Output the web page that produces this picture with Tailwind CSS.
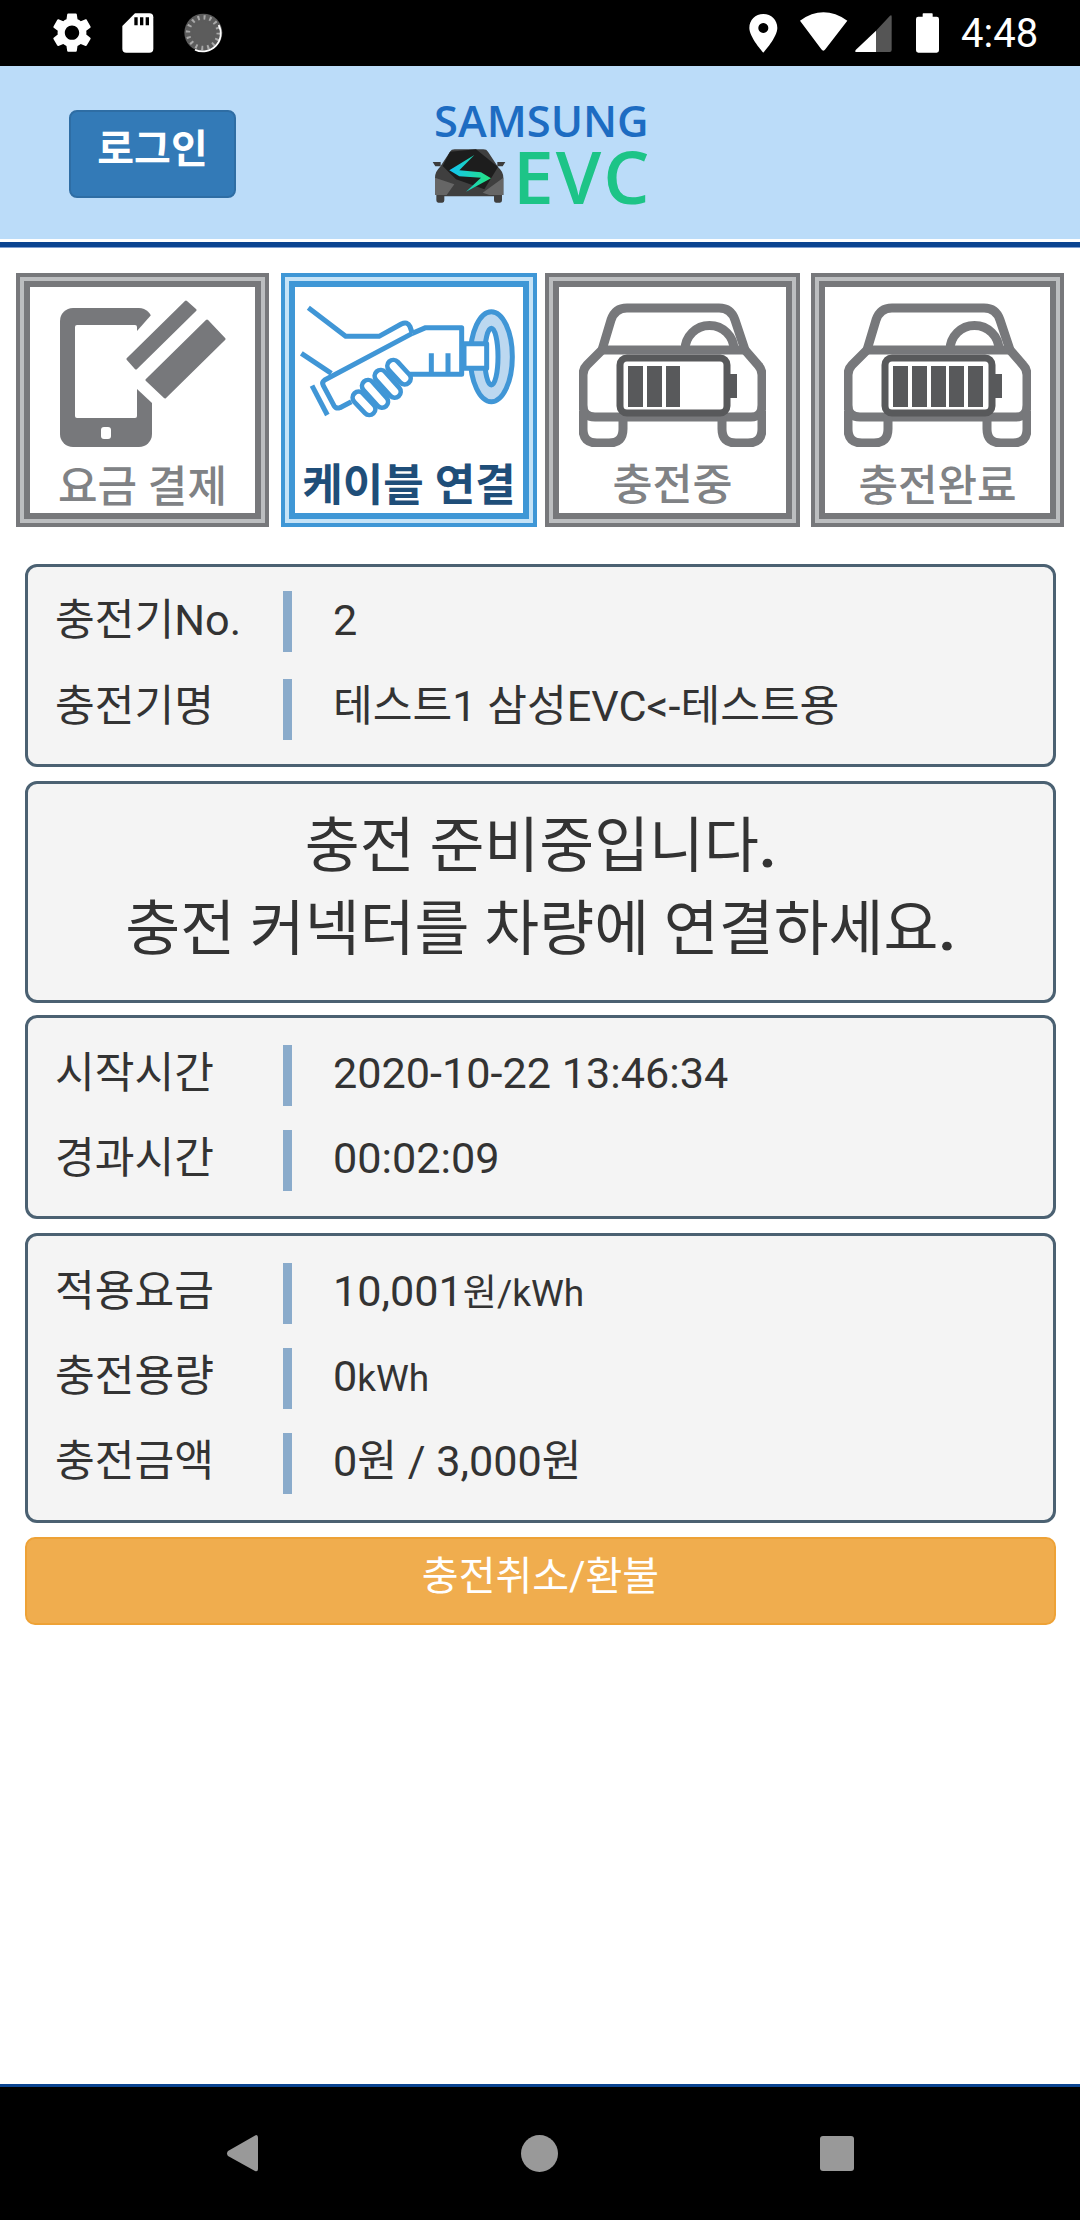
<!DOCTYPE html>
<html lang="ko">
<head>
<meta charset="utf-8">
<script src="https://cdn.jsdelivr.net/npm/@tailwindcss/browser@4"></script>
</head>
<body class="m-0 bg-white">
<div class="w-[1080px] h-[2220px] flex flex-col overflow-hidden bg-white text-[#333] font-['Roboto','Noto_Sans_CJK_KR',sans-serif]">

  <!-- status bar -->
  <div class="h-[66px] shrink-0 bg-black flex items-center">
    <svg class="ml-[40px]" width="200" height="66" viewBox="0 0 600 198">
      <g transform="translate(24,26) scale(6)"><path fill="#fff" d="M19.14 12.94c.04-.3.06-.61.06-.94 0-.32-.02-.64-.07-.94l2.03-1.58c.18-.14.23-.41.12-.61l-1.92-3.32c-.12-.22-.37-.29-.59-.22l-2.39.96c-.5-.38-1.03-.7-1.62-.94l-.36-2.54c-.04-.24-.24-.41-.48-.41h-3.84c-.24 0-.43.17-.47.41l-.36 2.54c-.59.24-1.13.57-1.62.94l-2.39-.96c-.22-.08-.47 0-.59.22L2.74 8.87c-.12.21-.08.47.12.61l2.03 1.58c-.05.3-.09.63-.09.94s.02.64.07.94l-2.03 1.58c-.18.14-.23.41-.12.61l1.92 3.32c.12.22.37.29.59.22l2.39-.96c.5.38 1.03.7 1.62.94l.36 2.54c.05.24.24.41.48.41h3.84c.24 0 .44-.17.47-.41l.36-2.54c.59-.24 1.13-.56 1.62-.94l2.39.96c.22.08.47 0 .59-.22l1.92-3.32c.12-.22.07-.47-.12-.61l-2.01-1.58zM12 15.6c-1.98 0-3.6-1.62-3.6-3.6s1.62-3.6 3.6-3.6 3.6 1.62 3.6 3.6-1.62 3.6-3.6 3.6z"/></g>
      <path fill="#fff" d="M285 40H328Q340 40 340 52V146Q340 158 328 158H259Q247 158 247 146V78Z"/>
      <path fill="#000" d="M283 52h10v24h-10zM300 52h10v24h-10zM317 52h10v24h-10z"/>
      <circle cx="490" cy="98" r="57" fill="#5c5c5c"/>
      <circle cx="490" cy="98" r="46" fill="none" stroke="#a8a8a8" stroke-width="13" stroke-dasharray="6 12"/>
      <circle cx="490" cy="98" r="33" fill="#5c5c5c"/>
      <path d="M536 75A54 54 0 0 1 465 149" fill="none" stroke="#fff" stroke-width="5"/>
    </svg>
    <svg class="ml-[500px]" width="220" height="66" viewBox="0 0 660 198">
      <path fill="#fff" fill-rule="evenodd" d="M70 42C46 42 28 60 28 84C28 112 70 158 70 158C70 158 112 112 112 84C112 60 94 42 70 42ZM70 69A15 15 0 1 1 69.900 69Z"/>
      <path fill="#fff" d="M180 62Q250 12 322 62L256 148Q250 156 244 148Z"/>
      <path fill="#555" d="M408 92L450 47Q455 43 455 50V150Q455 156 449 156H408Z"/>
      <path fill="#fff" d="M408 92V156H350Q343 156 347 150Z"/>
      <path fill="#fff" d="M548 50V42Q548 40 550 40H576Q578 40 578 42V50H590Q597 50 597 57V151Q597 158 590 158H535Q528 158 528 151V57Q528 50 535 50Z"/>
    </svg>
    <span class="ml-[1px] text-[40px] leading-none text-white pt-[2px]">4:48</span>
  </div>

  <!-- header -->
  <div class="h-[173px] shrink-0 bg-[#bbdcf9] flex items-center pt-[3px]">
    <button class="ml-[69px] w-[167px] h-[88px] rounded-[8px] bg-[#337ab7] border-2 border-[#2e6da4] text-white text-[40px] font-bold leading-none pb-[8px]">로그인</button>
    <div class="ml-[196px] flex flex-col w-[228px]">
      <span class="ml-[2px] h-[44px] text-[43.5px] leading-[32px] font-semibold text-[#1d6cc2] font-['Open_Sans',sans-serif]">SAMSUNG</span>
      <div class="flex items-center h-[54px]">
        <svg width="74" height="54" viewBox="18 165 222 160">
          <defs><linearGradient id="arrow" x1="0" y1="0" x2="1" y2="0"><stop offset="0" stop-color="#12c4f5"/><stop offset="1" stop-color="#25e27f"/></linearGradient></defs>
          <path fill="#3c3c3c" d="M20 203H44V216H28ZM238 203H214V216H230Z"/>
          <path fill="#3f3f3f" d="M72 172Q76 165 86 165H172Q182 165 186 172L216 218Q232 232 232 250V302H228V318Q228 325 222 325H210Q204 325 204 318V306H55V318Q55 325 49 325H37Q31 325 31 318V302H27V250Q27 232 42 218Z"/>
          <path fill="#1d1d1d" d="M72 172L150 165L216 218L175 285L90 255L50 215Z"/>
          <path fill="#666" d="M27 250L85 270L62 302H27ZM232 250L170 295L190 302H232Z"/>
          <path fill="url(#arrow)" d="M145 182L70 228L100 246L165 250L120 292L195 252L165 234L100 228Z"/>
        </svg>
        <span class="ml-[7px] text-[73px] leading-[42px] tracking-[2px] font-semibold text-[#1dc487] font-['Open_Sans',sans-serif]">EVC</span>
      </div>
    </div>
  </div>
  <div class="h-[3px] shrink-0 bg-white"></div>
  <div class="h-[5px] shrink-0 bg-[#0a4491]"></div>
  <div class="h-[1px] shrink-0 bg-[#7f9fd0]"></div>

  <!-- step tabs -->
  <div class="flex pl-[16px] pt-[25px] shrink-0">
    <div class="w-[253px] h-[254px] border-[4px] border-[#77787b]"><div class="h-full border-[4px] border-[#bcbec0]"><div class="h-full border-[6px] border-[#77787b] flex flex-col items-center pt-[13px]">
      <svg width="166" height="147" viewBox="0 0 166 147">
        <rect x="0" y="8" width="92" height="139" rx="13" fill="#77787b"/>
        <rect x="15" y="25" width="62" height="93" rx="2" fill="#fff"/>
        <rect x="41" y="127" width="10" height="12" rx="3" fill="#fff"/>
        <path fill="#fff" d="M92 14L77 31V89L92 103H100V14Z"/>
        <path fill="#77787b" stroke="#77787b" stroke-width="3" stroke-linejoin="round" d="M126 2L135 10L76 68L68 59Z"/>
        <path fill="#77787b" stroke="#77787b" stroke-width="3" stroke-linejoin="round" d="M147 21L164 39L105 97L87 80Z"/>
      </svg>
      <span class="mt-auto pb-[4px] text-[43px] leading-[44px] font-medium text-[#808285]">요금 결제</span>
    </div></div></div>

    <div class="ml-[12px] w-[256px] h-[254px] border-[4px] border-[#3f97d6]"><div class="h-full border-[4px] border-[#c5e3f7]"><div class="h-full border-[6px] border-[#3f97d6] flex flex-col items-center pt-[8px]">
      <svg width="230" height="130" viewBox="0 0 690 390" fill="none" stroke="#4096d6" stroke-width="15" stroke-linejoin="round" stroke-linecap="butt">
        <path d="M43 38L155 124H255L322 87Q340 78 348 95L355 115"/>
        <path d="M22 175L112 235"/>
        <path d="M54 272L100 360"/>
        <path d="M355 115L395 98H503V238H345"/>
        <path d="M355 115L92 255Q82 262 88 272L120 332Q126 342 138 338L172 320"/>
        <path d="M412 175V238M462 175V238"/>
        <ellipse cx="592" cy="185" rx="63" ry="135" fill="#bcd8f0"/>
        <ellipse cx="592" cy="185" rx="20" ry="85" fill="#fff"/>
        <path d="M510 146H578V220H510Z" fill="#fff"/>
        <g stroke-linecap="round">
          <path d="M194 308L226 342" stroke-width="50"/>
          <path d="M222 273L264 320" stroke-width="50"/>
          <path d="M260 243L302 290" stroke-width="50"/>
          <path d="M298 213L332 250" stroke-width="50"/>
          <path d="M194 308L226 342" stroke="#fff" stroke-width="22"/>
          <path d="M222 273L264 320" stroke="#fff" stroke-width="22"/>
          <path d="M260 243L302 290" stroke="#fff" stroke-width="22"/>
          <path d="M298 213L332 250" stroke="#fff" stroke-width="22"/>
        </g>
      </svg>
      <span class="mt-auto pb-[5px] text-[44px] leading-[44px] font-bold text-[#1f4e79]">케이블 연결</span>
    </div></div></div>

    <div class="ml-[8px] w-[255px] h-[254px] border-[4px] border-[#77787b]"><div class="h-full border-[4px] border-[#bcbec0]"><div class="h-full border-[6px] border-[#77787b] flex flex-col items-center pt-[16px]">
      <svg width="187" height="144" viewBox="0 0 187 144" fill="none">
        <g stroke="#77787b" stroke-width="9" stroke-linejoin="round">
          <path d="M23 47L32 17Q36 5 48 5H140Q152 5 156 17L166 47"/>
          <path d="M20 47H168"/>
          <path d="M106 47A24 24 0 0 1 155 47"/>
          <path d="M23 47L8 62Q4 66 4 72V102Q4 114 16 114H172Q183 114 183 102V72Q183 66 179 62L166 47"/>
          <path d="M4 108V126Q4 140 18 140H30Q44 140 44 126V112"/>
          <path d="M183 108V126Q183 140 169 140H157Q143 140 143 126V112"/>
        </g>
        <rect x="41" y="55" width="107" height="55" rx="7" fill="#fff" stroke="#58595b" stroke-width="7"/>
        <path fill="#58595b" d="M151 71h7v24h-7zM49 63h15v41H49zM68 63h15v41H68zM87 63h14v41H87z"/>
      </svg>
      <span class="mt-auto pb-[5px] text-[43.5px] leading-[44px] font-medium text-[#808285]">충전중</span>
    </div></div></div>

    <div class="ml-[11px] w-[253px] h-[254px] border-[4px] border-[#77787b]"><div class="h-full border-[4px] border-[#bcbec0]"><div class="h-full border-[6px] border-[#77787b] flex flex-col items-center pt-[16px]">
      <svg width="187" height="144" viewBox="0 0 187 144" fill="none">
        <g stroke="#77787b" stroke-width="9" stroke-linejoin="round">
          <path d="M23 47L32 17Q36 5 48 5H140Q152 5 156 17L166 47"/>
          <path d="M20 47H168"/>
          <path d="M106 47A24 24 0 0 1 155 47"/>
          <path d="M23 47L8 62Q4 66 4 72V102Q4 114 16 114H172Q183 114 183 102V72Q183 66 179 62L166 47"/>
          <path d="M4 108V126Q4 140 18 140H30Q44 140 44 126V112"/>
          <path d="M183 108V126Q183 140 169 140H157Q143 140 143 126V112"/>
        </g>
        <rect x="41" y="55" width="107" height="55" rx="7" fill="#fff" stroke="#58595b" stroke-width="7"/>
        <path fill="#58595b" d="M151 71h7v24h-7zM49 63h15v41H49zM68 63h15v41H68zM87 63h15v41H87zM105 63h15v41h-15zM124 63h15v41h-15z"/>
      </svg>
      <span class="mt-auto pb-[5px] text-[43px] leading-[44px] font-medium text-[#808285]">충전완료</span>
    </div></div></div>
  </div>

  <!-- info cards -->
  <div class="ml-[25px] mr-[24px] mt-[37px] h-[203px] rounded-[12px] border-[3px] border-[#4b6172] bg-[#f4f4f4] pl-[27px] pr-[28px] pt-[24px] flex flex-col gap-[27px] text-[43.2px] shrink-0">
    <div class="h-[61px] flex items-center"><span class="w-[228px] pb-[1px]">충전기No.</span><span class="w-[9px] h-[61px] bg-[#8aabcb]"></span><span class="ml-[41px] pb-[1px]">2</span></div>
    <div class="h-[61px] flex items-center"><span class="w-[228px] pb-[5px]">충전기명</span><span class="w-[9px] h-[61px] bg-[#8aabcb]"></span><span class="ml-[41px] pb-[5px]">테스트1 삼성EVC&lt;-테스트용</span></div>
  </div>

  <div class="ml-[25px] mr-[24px] mt-[14px] h-[222px] rounded-[12px] border-[3px] border-[#4b6172] bg-[#f4f4f4] flex flex-col items-center justify-center text-[59.700px] leading-[83px] pb-[6px] shrink-0">
    <span>충전 준비중입니다<span class="font-bold">.</span></span>
    <span>충전 커넥터를 차량에 연결하세요<span class="font-bold">.</span></span>
  </div>

  <div class="ml-[25px] mr-[24px] mt-[12px] h-[204px] rounded-[12px] border-[3px] border-[#4b6172] bg-[#f4f4f4] pl-[27px] pr-[28px] pt-[27px] flex flex-col gap-[24px] text-[43.2px] shrink-0">
    <div class="h-[61px] flex items-center"><span class="w-[228px] pb-[2px]">시작시간</span><span class="w-[9px] h-[61px] bg-[#8aabcb]"></span><span class="ml-[41px] pb-[2px]">2020-10-22 13:46:34</span></div>
    <div class="h-[61px] flex items-center"><span class="w-[228px] pb-[2px]">경과시간</span><span class="w-[9px] h-[61px] bg-[#8aabcb]"></span><span class="ml-[41px] pb-[2px]">00:02:09</span></div>
  </div>

  <div class="ml-[25px] mr-[24px] mt-[14px] h-[290px] rounded-[12px] border-[3px] border-[#4b6172] bg-[#f4f4f4] pl-[27px] pr-[28px] pt-[27px] flex flex-col gap-[24px] text-[43.2px] shrink-0">
    <div class="h-[61px] flex items-center"><span class="w-[228px] pb-[2px]">적용요금</span><span class="w-[9px] h-[61px] bg-[#8aabcb]"></span><span class="ml-[41px] pb-[2px]">10,001<span class="text-[37px]">원/kWh</span></span></div>
    <div class="h-[61px] flex items-center"><span class="w-[228px] pb-[2px]">충전용량</span><span class="w-[9px] h-[61px] bg-[#8aabcb]"></span><span class="ml-[41px] pb-[2px]">0<span class="text-[37px]">kWh</span></span></div>
    <div class="h-[61px] flex items-center"><span class="w-[228px] pb-[2px]">충전금액</span><span class="w-[9px] h-[61px] bg-[#8aabcb]"></span><span class="ml-[41px] pb-[2px]">0원 / 3,000원</span></div>
  </div>

  <button class="ml-[25px] mr-[24px] mt-[14px] h-[88px] shrink-0 rounded-[10px] bg-[#f0ad4e] border-2 border-[#eea236] text-white text-[40px] leading-none pb-[9px]">충전취소/환불</button>

  <div class="mt-auto h-[3px] shrink-0 bg-[#0a4491]"></div>
  <div class="h-[133px] shrink-0 bg-black flex items-center pl-[226px]">
    <svg width="32" height="37" viewBox="0 0 32 37"><path fill="#999" d="M30 0Q32 0 32 3V34Q32 37 29 36L2 21Q0 18.500 2 16Z"/></svg>
    <svg class="ml-[263px]" width="37" height="37" viewBox="0 0 37 37"><circle cx="18.500" cy="18.500" r="18.500" fill="#999"/></svg>
    <svg class="ml-[262px]" width="34" height="35" viewBox="0 0 34 35"><rect width="34" height="35" rx="3" fill="#999"/></svg>
  </div>
</div>
</body>
</html>
